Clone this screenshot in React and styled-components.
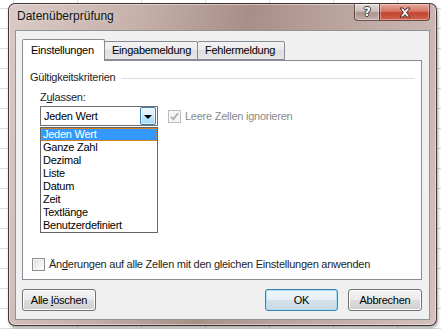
import React from 'react';
import styled, { createGlobalStyle } from 'styled-components';

const GlobalStyle = createGlobalStyle`
  html, body {
    margin: 0;
    padding: 0;
  }
  body {
    width: 441px;
    height: 329px;
    overflow: hidden;
    font-family: "Liberation Sans", Arial, sans-serif;
    font-size: 11px;
    letter-spacing: -0.25px;
    color: #000;
    background-color: #fff;
    background-image:
      linear-gradient(to bottom, #dadcdd 1px, transparent 1px),
      linear-gradient(to right, #dadcdd 1px, transparent 1px);
    background-size: 64px 20px, 64px 20px;
    background-position: 0 8px, 13px 0;
  }
`;

const Desktop = styled.div`
  padding: 3px 0 0 8px;
`;

const Window = styled.div`
  width: 429px;
  height: 323px;
  box-sizing: border-box;
  border: 1px solid rgba(45, 30, 28, 0.85);
  border-radius: 7px;
  background: linear-gradient(100deg, #d9cac5 0%, #c6afa9 28%, #a78f88 50%, #b9a19b 66%, #d3c1bc 100%);
  box-shadow: inset 0 0 0 1px rgba(255, 255, 255, 0.45), 1px 2px 3px rgba(0, 0, 0, 0.35);
  display: flex;
  flex-direction: column;
  padding: 0 6px 5px 6px;
`;

const TitleBar = styled.div`
  height: 26px;
  display: flex;
  align-items: flex-start;
`;

const Title = styled.div`
  padding: 5px 0 0 2px;
  font-size: 12px;
  line-height: 14px;
  letter-spacing: 0;
  color: #111;
  text-shadow: 0 0 6px rgba(255, 255, 255, 0.6);
`;

const Controls = styled.div`
  margin-left: auto;
  display: flex;
`;

const CaptionButton = styled.div`
  width: ${p => p.$w}px;
  height: 17px;
  box-sizing: border-box;
  display: flex;
  align-items: center;
  justify-content: center;
  border: 1px solid rgba(60, 40, 38, 0.75);
  border-top: none;
  border-radius: ${p => (p.$first ? '0 0 0 4px' : '0 0 4px 0')};
  margin-left: ${p => (p.$first ? 0 : -1)}px;
  background: ${p =>
    p.$close
      ? 'linear-gradient(#e9a99b 0%, #d47766 45%, #c24430 55%, #d1644d 100%)'
      : 'linear-gradient(rgba(255,255,255,0.55) 0%, rgba(255,255,255,0.25) 45%, rgba(130,110,105,0.35) 55%, rgba(200,185,180,0.5) 100%)'};
  box-shadow: inset 0 0 0 1px rgba(255, 255, 255, 0.35);
  font-family: "DejaVu Sans", sans-serif;
  font-weight: bold;
  font-size: 12px;
  color: #fff;
  text-shadow: -1px 0 #3b3b3b, 1px 0 #3b3b3b, 0 -1px #3b3b3b, 0 1px #3b3b3b;
`;

const Client = styled.div`
  flex: 1;
  background: #f0f0f0;
  border: 1px solid #8f9499;
  padding: 8px 0 0 6px;
  display: flex;
  flex-direction: column;
`;

const TabRow = styled.div`
  display: flex;
  align-items: flex-end;
  height: 21px;
  position: relative;
  z-index: 1;
`;

const Tab = styled.div`
  width: ${p => p.$w}px;
  height: ${p => (p.$active ? 22 : 19)}px;
  box-sizing: border-box;
  border: 1px solid #898c95;
  border-bottom: ${p => (p.$active ? 'none' : '1px solid #898c95')};
  margin-bottom: ${p => (p.$active ? -1 : 0)}px;
  margin-left: ${p => (p.$first ? 0 : -1)}px;
  border-radius: 2px 2px 0 0;
  background: ${p => (p.$active ? '#fff' : 'linear-gradient(#f3f3f3 0%, #ebebeb 50%, #dedede 50%, #e6e6e6 100%)')};
  display: flex;
  align-items: center;
  padding-left: ${p => p.$pad}px;
  line-height: 13px;
`;

const Panel = styled.div`
  width: 400px;
  height: 220px;
  box-sizing: border-box;
  background: #fff;
  border: 1px solid #898c95;
  padding: 10px 0 8px 0;
  display: flex;
  flex-direction: column;
`;

const GroupHeader = styled.div`
  display: flex;
  align-items: center;
  padding-left: 7px;
  line-height: 13px;
  color: #1e1e1e;
`;

const GroupLine = styled.div`
  flex: 1;
  height: 1px;
  background: #d5dfe5;
  margin: 1px 6px 0 6px;
`;

const Field = styled.div`
  margin: 7px 0 0 17px;
  display: flex;
  flex-direction: column;
`;

const Label = styled.div`
  line-height: 13px;
  color: #1e1e1e;
`;

const Key = styled.span`
  text-decoration: underline;
`;

const ComboRow = styled.div`
  margin-top: 2px;
  display: flex;
  align-items: center;
`;

const ComboWrap = styled.div`
  position: relative;
`;

const Combo = styled.div`
  width: 118px;
  height: 20px;
  box-sizing: border-box;
  border: 1px solid #707070;
  display: flex;
  align-items: center;
  padding: 0 1px 0 3px;
  background: #fff;
`;

const ComboText = styled.div`
  flex: 1;
  line-height: 13px;
`;

const DropButton = styled.div`
  width: 16px;
  height: 18px;
  box-sizing: border-box;
  border: 1px solid #3c7fb1;
  border-radius: 2px;
  background: linear-gradient(#eaf6fd 0%, #d9f0fc 45%, #bee6fd 50%, #a7d9f5 100%);
  box-shadow: inset 0 0 0 1px rgba(255, 255, 255, 0.5);
  display: flex;
  align-items: center;
  justify-content: center;
`;

const Arrow = styled.div`
  width: 0;
  height: 0;
  border-left: 4px solid transparent;
  border-right: 4px solid transparent;
  border-top: 4px solid #000;
  margin-top: 1px;
`;

const DropList = styled.div`
  position: absolute;
  left: 0;
  top: 21px;
  width: 118px;
  box-sizing: border-box;
  border: 1px solid #646464;
  background: #fff;
  z-index: 2;
`;

const Item = styled.div`
  height: 13px;
  line-height: 13px;
  padding-left: 2px;
  color: ${p => (p.$selected ? '#fff' : '#000')};
  background: ${p => (p.$selected ? '#3399ff' : 'transparent')};
  outline: ${p => (p.$selected ? '1px dotted #e38b28' : 'none')};
  outline-offset: -1px;
`;

const Check = styled.div`
  width: 13px;
  height: 13px;
  box-sizing: border-box;
  border: 1px solid ${p => (p.$disabled ? '#bcbcbc' : '#8e8f8f')};
  background: ${p => (p.$disabled ? '#f4f4f4' : 'linear-gradient(135deg, #dcdcdc 0%, #f6f6f6 70%, #fff 100%)')};
  box-shadow: inset 0 0 0 1px ${p => (p.$disabled ? '#f7f7f7' : '#f4f4f4')};
  display: flex;
  align-items: center;
  justify-content: center;
  flex-shrink: 0;
`;

const CheckField = styled.div`
  display: flex;
  align-items: center;
  gap: 4px;
  margin-left: ${p => p.$ml}px;
  line-height: 13px;
  color: ${p => (p.$disabled ? '#8a8a8a' : '#1e1e1e')};
`;

const Footer = styled.div`
  margin-top: auto;
`;

const ButtonRow = styled.div`
  width: 400px;
  display: flex;
  margin-top: 9px;
  gap: 10px;
`;

const Button = styled.div`
  width: ${p => p.$w}px;
  height: 22px;
  box-sizing: border-box;
  border: 1px solid ${p => (p.$default ? '#3c7fb1' : '#707070')};
  border-radius: 3px;
  background: ${p =>
    p.$default
      ? 'linear-gradient(#eef6fa 0%, #e6eff4 50%, #d5e2e9 50%, #cad8e0 100%)'
      : 'linear-gradient(#f2f2f2 0%, #ebebeb 50%, #dddddd 50%, #cfcfcf 100%)'};
  box-shadow: inset 0 0 0 1px ${p => (p.$default ? '#a9e2f8' : '#fcfcfc')};
  display: flex;
  align-items: center;
  justify-content: center;
  line-height: 13px;
  margin-left: ${p => (p.$push ? 'auto' : '0')};
`;

const items = ['Jeden Wert', 'Ganze Zahl', 'Dezimal', 'Liste', 'Datum', 'Zeit', 'Textlänge', 'Benutzerdefiniert'];

const CheckMark = ({ color }) => (
  <svg width="9" height="9" viewBox="0 0 9 9">
    <path d="M1 4.8 L3.4 7.3 L8 1.2" fill="none" stroke={color} strokeWidth="1.6" />
  </svg>
);

const CloseGlyph = () => (
  <svg width="14" height="11" viewBox="0 0 14 11">
    <path
      d="M2 1 H5 L7 3.4 L9 1 H12 L8.6 5.5 L12 10 H9 L7 7.6 L5 10 H2 L5.4 5.5 Z"
      fill="#fff"
      stroke="#4a2a26"
      strokeWidth="1"
      strokeLinejoin="round"
    />
  </svg>
);

export default function App() {
  return (
    <>
      <GlobalStyle />
      <Desktop>
        <Window>
          <TitleBar>
            <Title>Datenüberprüfung</Title>
            <Controls>
              <CaptionButton $w={26} $first>?</CaptionButton>
              <CaptionButton $w={51} $close>
                <CloseGlyph />
              </CaptionButton>
            </Controls>
          </TitleBar>
          <Client>
            <TabRow>
              <Tab $active $first $w={83} $pad={8}>Einstellungen</Tab>
              <Tab $w={94} $pad={7}>Eingabemeldung</Tab>
              <Tab $w={88} $pad={7}>Fehlermeldung</Tab>
            </TabRow>
            <Panel>
              <GroupHeader>
                Gültigkeitskriterien
                <GroupLine />
              </GroupHeader>
              <Field>
                <Label>Z<Key>u</Key>lassen:</Label>
                <ComboRow>
                  <ComboWrap>
                    <Combo>
                      <ComboText>Jeden Wert</ComboText>
                      <DropButton>
                        <Arrow />
                      </DropButton>
                    </Combo>
                    <DropList>
                      {items.map((it, i) => (
                        <Item key={it} $selected={i === 0}>{it}</Item>
                      ))}
                    </DropList>
                  </ComboWrap>
                  <CheckField $ml={10} $disabled>
                    <Check $disabled>
                      <CheckMark color="#a8a8a8" />
                    </Check>
                    <span>Leere Zellen ignorieren</span>
                  </CheckField>
                </ComboRow>
              </Field>
              <Footer>
                <CheckField $ml={9}>
                  <Check />
                  <span>Än<Key>d</Key>erungen auf alle Zellen mit den gleichen Einstellungen anwenden</span>
                </CheckField>
              </Footer>
            </Panel>
            <ButtonRow>
              <Button $w={74}><span>Alle <Key>l</Key>öschen</span></Button>
              <Button $w={73} $default $push>OK</Button>
              <Button $w={74}>Abbrechen</Button>
            </ButtonRow>
          </Client>
        </Window>
      </Desktop>
    </>
  );
}
